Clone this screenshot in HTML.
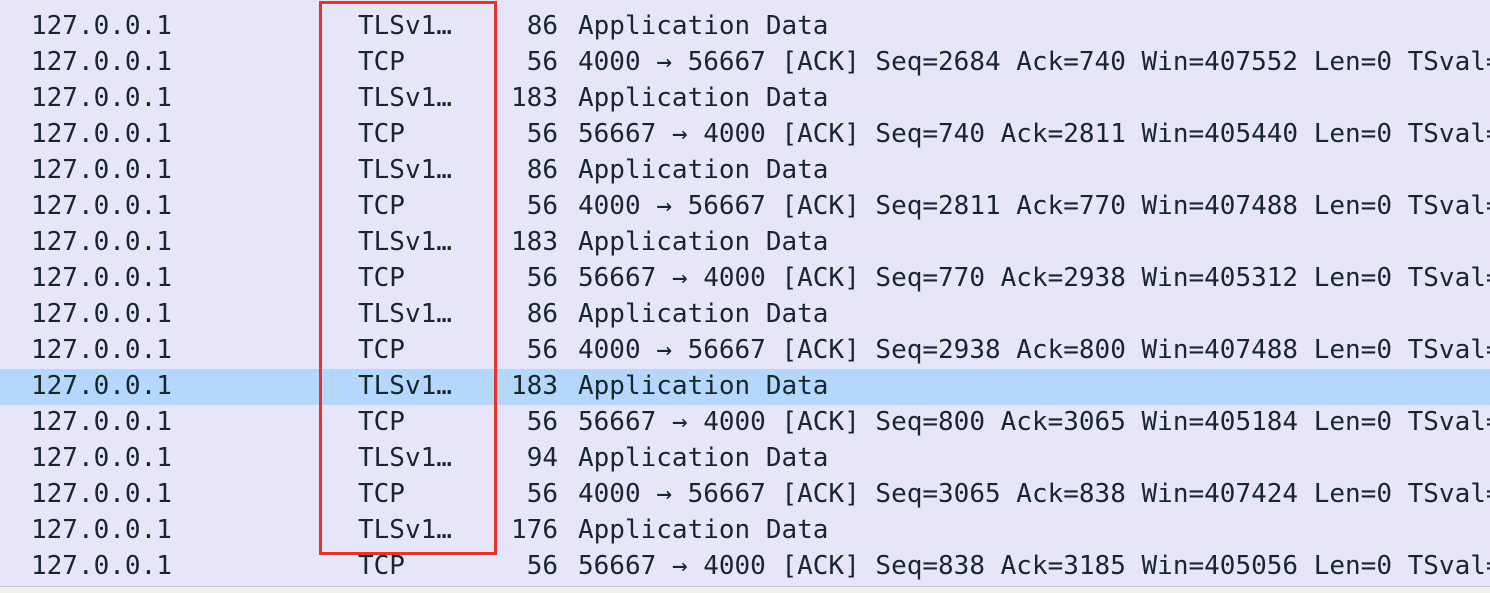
<!DOCTYPE html>
<html><head><meta charset="utf-8"><style>
html,body{margin:0;padding:0}
body{width:1490px;height:592px;background:#e7e5f9;position:relative;overflow:hidden;font-family:"DejaVu Sans Mono","Liberation Mono",monospace;font-size:26px;color:#17262f}
.r{position:absolute;left:0;width:1490px;height:36px;line-height:36px;white-space:pre;margin-top:1px}
.r span{position:absolute;top:0}
.a{left:31px}.p{left:358px}.l{right:932px;text-align:right}.i{left:578px}
.hl{position:absolute;left:0;top:369px;width:1490px;height:36px;background:#b4d7fb}
.box{position:absolute;left:319px;top:1px;width:172px;height:548px;border:3px solid #e5332a}
.bot{position:absolute;left:0;top:586px;width:1490px;height:6px;background:#efeff0;border-top:1px solid #c9c8cf}
</style></head><body>
<div class="hl"></div>
<div class="r" style="top:7px"><span class="a">127.0.0.1</span><span class="p">TLSv1…</span><span class="l">86</span><span class="i">Application Data</span></div>
<div class="r" style="top:43px"><span class="a">127.0.0.1</span><span class="p">TCP</span><span class="l">56</span><span class="i">4000 → 56667 [ACK] Seq=2684 Ack=740 Win=407552 Len=0 TSval=</span></div>
<div class="r" style="top:79px"><span class="a">127.0.0.1</span><span class="p">TLSv1…</span><span class="l">183</span><span class="i">Application Data</span></div>
<div class="r" style="top:115px"><span class="a">127.0.0.1</span><span class="p">TCP</span><span class="l">56</span><span class="i">56667 → 4000 [ACK] Seq=740 Ack=2811 Win=405440 Len=0 TSval=</span></div>
<div class="r" style="top:151px"><span class="a">127.0.0.1</span><span class="p">TLSv1…</span><span class="l">86</span><span class="i">Application Data</span></div>
<div class="r" style="top:187px"><span class="a">127.0.0.1</span><span class="p">TCP</span><span class="l">56</span><span class="i">4000 → 56667 [ACK] Seq=2811 Ack=770 Win=407488 Len=0 TSval=</span></div>
<div class="r" style="top:223px"><span class="a">127.0.0.1</span><span class="p">TLSv1…</span><span class="l">183</span><span class="i">Application Data</span></div>
<div class="r" style="top:259px"><span class="a">127.0.0.1</span><span class="p">TCP</span><span class="l">56</span><span class="i">56667 → 4000 [ACK] Seq=770 Ack=2938 Win=405312 Len=0 TSval=</span></div>
<div class="r" style="top:295px"><span class="a">127.0.0.1</span><span class="p">TLSv1…</span><span class="l">86</span><span class="i">Application Data</span></div>
<div class="r" style="top:331px"><span class="a">127.0.0.1</span><span class="p">TCP</span><span class="l">56</span><span class="i">4000 → 56667 [ACK] Seq=2938 Ack=800 Win=407488 Len=0 TSval=</span></div>
<div class="r" style="top:367px"><span class="a">127.0.0.1</span><span class="p">TLSv1…</span><span class="l">183</span><span class="i">Application Data</span></div>
<div class="r" style="top:403px"><span class="a">127.0.0.1</span><span class="p">TCP</span><span class="l">56</span><span class="i">56667 → 4000 [ACK] Seq=800 Ack=3065 Win=405184 Len=0 TSval=</span></div>
<div class="r" style="top:439px"><span class="a">127.0.0.1</span><span class="p">TLSv1…</span><span class="l">94</span><span class="i">Application Data</span></div>
<div class="r" style="top:475px"><span class="a">127.0.0.1</span><span class="p">TCP</span><span class="l">56</span><span class="i">4000 → 56667 [ACK] Seq=3065 Ack=838 Win=407424 Len=0 TSval=</span></div>
<div class="r" style="top:511px"><span class="a">127.0.0.1</span><span class="p">TLSv1…</span><span class="l">176</span><span class="i">Application Data</span></div>
<div class="r" style="top:547px"><span class="a">127.0.0.1</span><span class="p">TCP</span><span class="l">56</span><span class="i">56667 → 4000 [ACK] Seq=838 Ack=3185 Win=405056 Len=0 TSval=</span></div>
<div class="box"></div>
<div class="bot"></div>
</body></html>
